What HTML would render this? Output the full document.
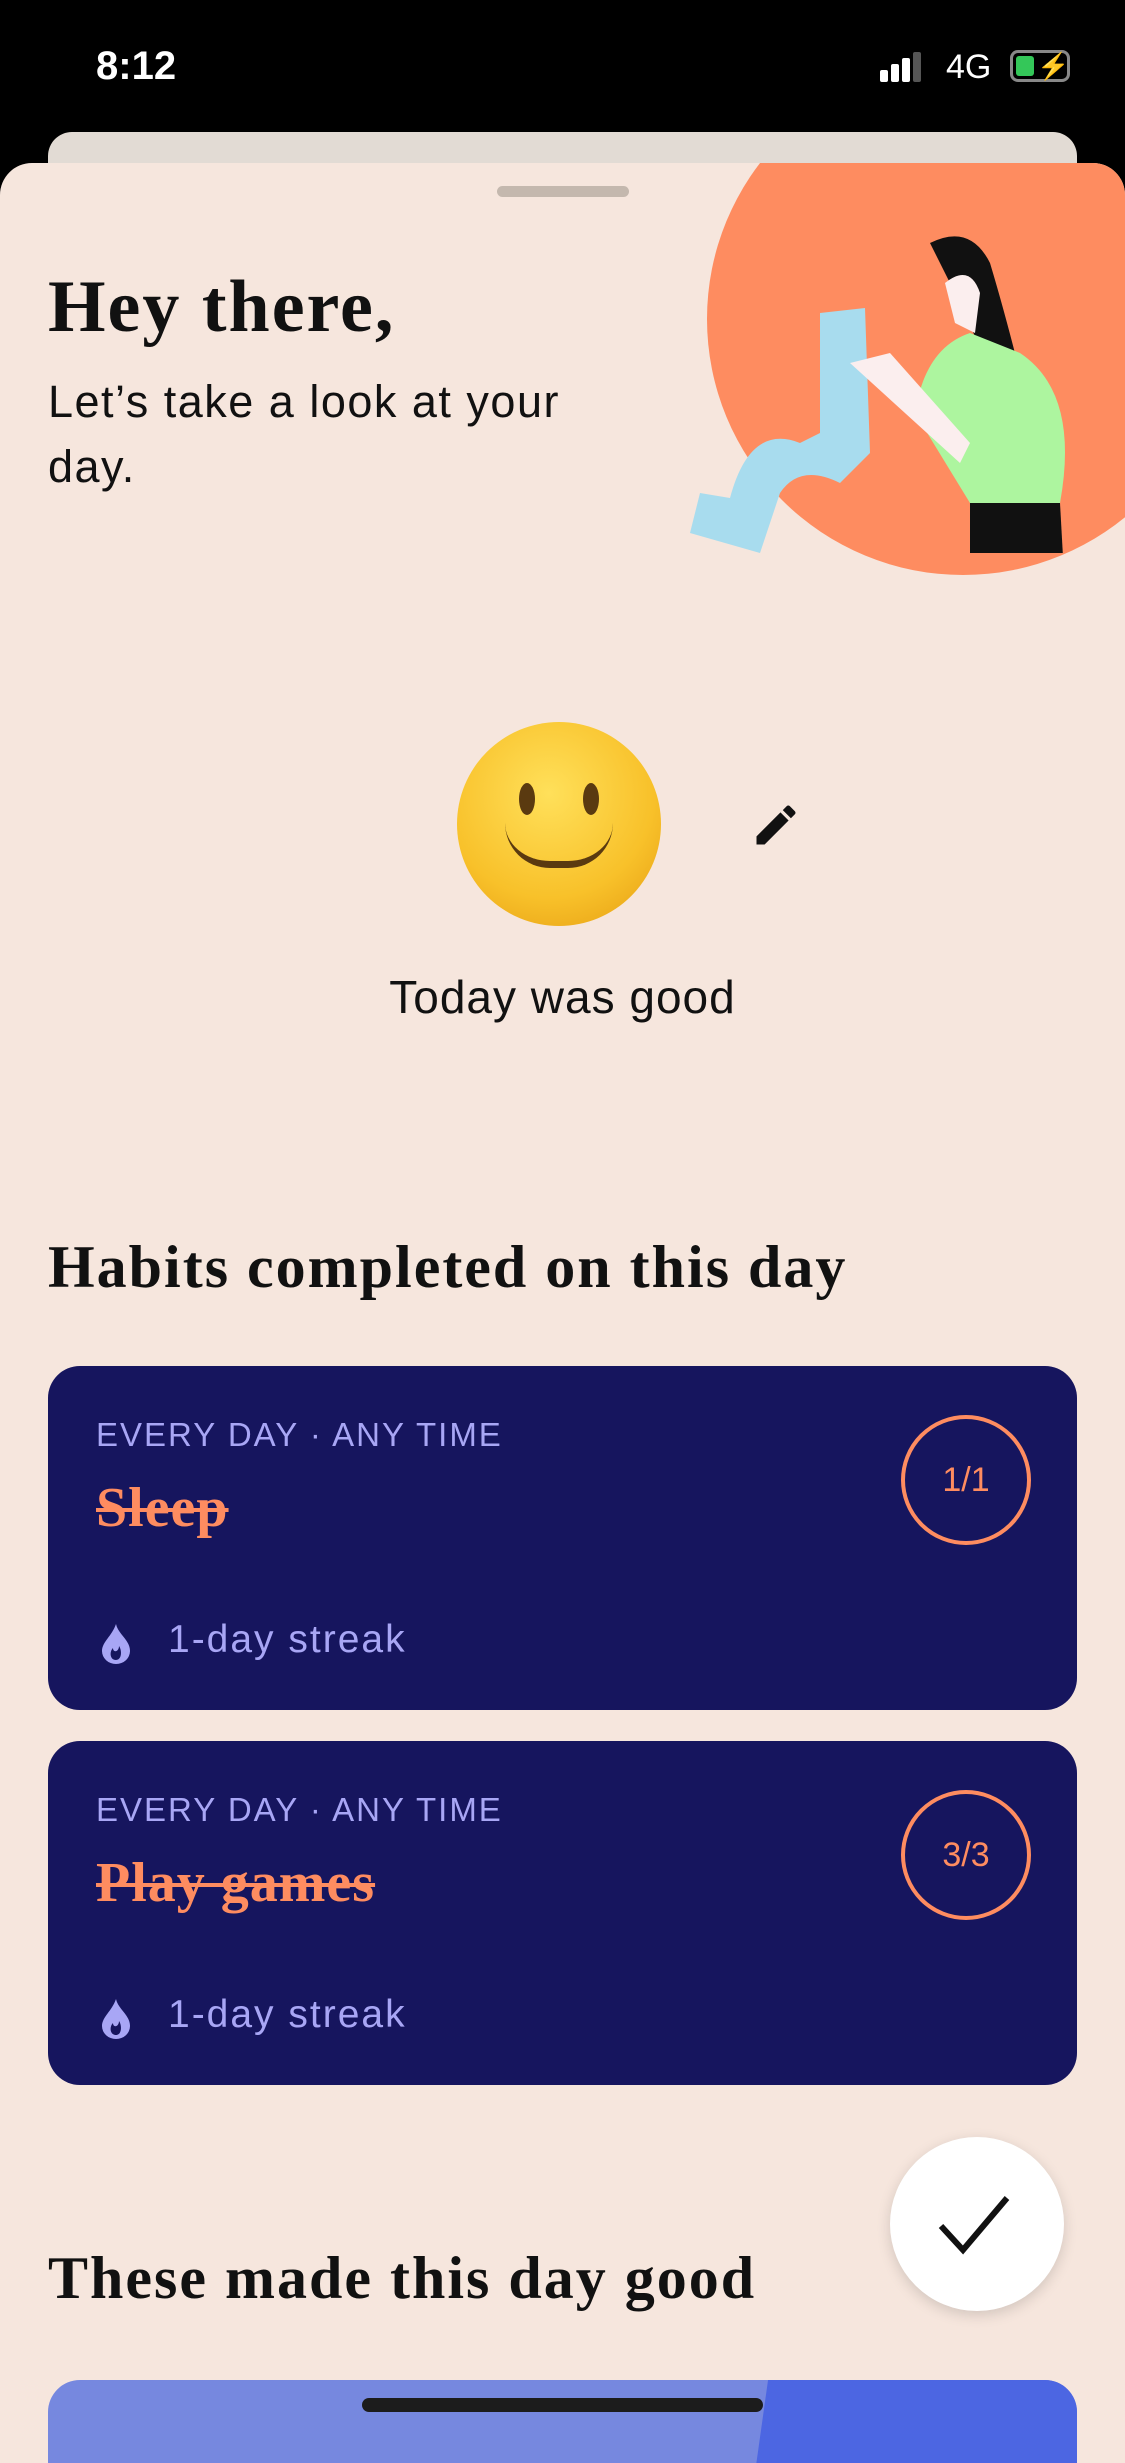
<!DOCTYPE html>
<html><head><meta charset="utf-8"><style>
*{margin:0;padding:0;box-sizing:border-box}
body{width:1125px;height:2436px;background:#000;position:relative;overflow:hidden;font-family:"Liberation Sans",sans-serif}
.a{position:absolute}
.serif{font-family:"Liberation Serif",serif;font-weight:bold;color:#111}
.card{position:absolute;left:48px;width:1029px;height:344px;background:#16155e;border-radius:32px;overflow:hidden}
.meta{position:absolute;left:48px;top:50px;font-size:33px;letter-spacing:2px;color:#a8a6f5}
.title{position:absolute;left:48px;top:110px;font-family:"Liberation Serif",serif;font-weight:bold;font-size:56px;letter-spacing:1px;color:#fe8c60;text-decoration:line-through;text-decoration-thickness:4px}
.ring{position:absolute;left:853px;top:49px;width:130px;height:130px;border:4px solid #fe8c60;border-radius:50%;color:#fe8c60;font-size:34px;display:flex;align-items:center;justify-content:center}
.streak{position:absolute;left:120px;top:252px;font-size:39px;color:#a8a6f5;letter-spacing:2px}
.flame{position:absolute;left:52px;top:258px}
</style></head><body>
<div class="a" style="left:96px;top:44px;color:#fff;font-size:40px;font-weight:bold">8:12</div>
<div class="a" style="left:880px;top:52px;width:50px;height:30px">
<div class="a" style="left:0;top:18px;width:8px;height:12px;background:#fff;border-radius:2px"></div>
<div class="a" style="left:11px;top:12px;width:8px;height:18px;background:#fff;border-radius:2px"></div>
<div class="a" style="left:22px;top:6px;width:8px;height:24px;background:#fff;border-radius:2px"></div>
<div class="a" style="left:33px;top:0;width:8px;height:30px;background:#555;border-radius:2px"></div></div>
<div class="a" style="left:946px;top:48px;color:#fff;font-size:34px">4G</div>
<div class="a" style="left:1010px;top:50px;width:60px;height:32px;border:3px solid #888;border-radius:8px"><div class="a" style="left:3px;top:3px;width:18px;height:20px;background:#34c759;border-radius:3px"></div><div class="a" style="left:24px;top:-2px;color:#fff;font-size:26px">⚡</div></div>
<div class="a" style="left:48px;top:132px;width:1029px;height:80px;background:#e2dbd4;border-radius:24px 24px 0 0"></div>
<div class="a" style="left:0;top:163px;width:1125px;height:2300px;background:#f6e6dd;border-radius:32px 32px 0 0;overflow:hidden">
<div class="a" style="left:707px;top:-100px;width:512px;height:512px;border-radius:50%;background:#fe8c60"></div>
<svg class="a" style="left:670px;top:60px" width="455" height="330" viewBox="0 0 455 330">
<path d="M150 90 L195 85 L200 230 L170 260 Q130 240 110 270 L90 330 L20 310 L30 270 L60 275 Q80 200 130 220 L150 210 Z" fill="#a8dcee"/>
<path d="M260 20 Q300 0 320 40 Q335 90 350 150 Q355 180 330 175 Q310 130 300 100 Z" fill="#111"/>
<path d="M275 60 Q300 40 310 70 L305 110 L285 100 Z" fill="#fbeeee"/>
<path d="M245 190 Q255 125 300 110 L350 130 Q410 170 390 280 L300 280 Z" fill="#adf59f"/>
<path d="M300 280 L390 280 L395 370 L300 370 Z" fill="#111"/>
<path d="M180 140 L220 130 L300 220 L290 240 Z" fill="#fbeeee"/>
</svg>
<div class="a serif" style="left:48px;top:102px;font-size:74px;letter-spacing:2px">Hey there,</div>
<div class="a" style="left:48px;top:206px;font-size:45px;letter-spacing:1.5px;line-height:65px;color:#111;width:560px">Let’s take a look at your day.</div>
<div class="a" style="left:457px;top:559px;width:204px;height:204px;border-radius:50%;background:radial-gradient(circle at 45% 35%,#ffe05a,#f8c12a 60%,#e49a10)"></div>
<div class="a" style="left:519px;top:620px;width:16px;height:32px;background:#5a3a10;border-radius:50%"></div>
<div class="a" style="left:583px;top:620px;width:16px;height:32px;background:#5a3a10;border-radius:50%"></div>
<div class="a" style="left:505px;top:660px;width:108px;height:45px;border-bottom:7px solid #5a3a10;border-radius:0 0 54px 54px"></div>
<svg class="a" style="left:750px;top:636px" width="52" height="52" viewBox="0 0 24 24"><path d="M3 17.25V21h3.75L17.81 9.94l-3.75-3.75L3 17.25zM20.71 7.04a1 1 0 000-1.41l-2.34-2.34a1 1 0 00-1.41 0l-1.83 1.83 3.75 3.75 1.83-1.83z" fill="#111"/></svg>
<div class="a" style="left:0;width:1125px;top:807px;text-align:center;font-size:46px;letter-spacing:1px;color:#111">Today was good</div>
<div class="a serif" style="left:48px;top:1070px;font-size:60px;letter-spacing:2px">Habits completed on this day</div>
<div class="a serif" style="left:48px;top:2081px;font-size:60px;letter-spacing:2px">These made this day good</div>
<div class="a" style="left:48px;top:2217px;width:1029px;height:200px;background:#7688df;border-radius:32px 32px 0 0;overflow:hidden"><div class="a" style="left:706px;top:0;width:400px;height:200px;background:#4c66e2;transform:skewX(-8deg)"></div></div>
<div class="a" style="left:497px;top:23px;width:132px;height:11px;background:#c4b8ae;border-radius:6px"></div>
</div>
<div class="card" style="top:1366px">
<div class="meta">EVERY DAY · ANY TIME</div><div class="title">Sleep</div><div class="ring">1/1</div>
<svg class="flame" width="32" height="40" viewBox="0 0 32 40"><path d="M16 0 C18 10 30 16 30 27 A14 13 0 0 1 2 27 C2 18 12 12 16 0Z M16 36 C10 36 9 28 13 24 C13 29 19 28 19 22 C22 26 22 36 16 36Z" fill="#a8a6f5" fill-rule="evenodd"/></svg>
<div class="streak">1-day streak</div></div>
<div class="card" style="top:1741px">
<div class="meta">EVERY DAY · ANY TIME</div><div class="title">Play games</div><div class="ring">3/3</div>
<svg class="flame" width="32" height="40" viewBox="0 0 32 40"><path d="M16 0 C18 10 30 16 30 27 A14 13 0 0 1 2 27 C2 18 12 12 16 0Z M16 36 C10 36 9 28 13 24 C13 29 19 28 19 22 C22 26 22 36 16 36Z" fill="#a8a6f5" fill-rule="evenodd"/></svg>
<div class="streak">1-day streak</div></div>
<div class="a" style="left:890px;top:2137px;width:174px;height:174px;border-radius:50%;background:#fff;box-shadow:0 4px 14px rgba(0,0,0,.15)"></div>
<svg class="a" style="left:935px;top:2190px" width="80" height="70" viewBox="0 0 80 70"><path d="M6 36 L28 60 L72 8" fill="none" stroke="#111" stroke-width="6"/></svg>
<div class="a" style="left:362px;top:2398px;width:401px;height:14px;background:#1c1c1c;border-radius:7px"></div>
</body></html>
